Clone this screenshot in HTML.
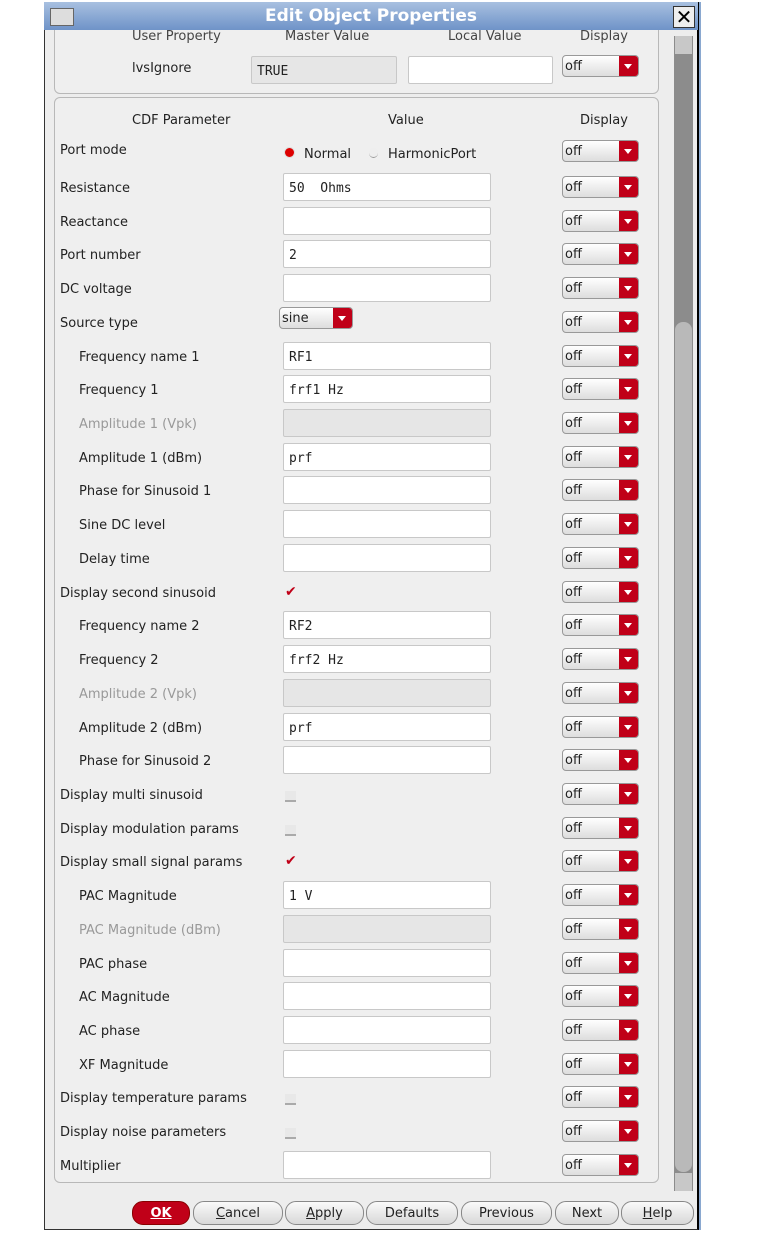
<!DOCTYPE html>
<html><head><style>
body{margin:0;width:758px;height:1245px;background:#fff;position:relative;overflow:hidden;font-family:"DejaVu Sans","Liberation Sans",sans-serif;font-size:13px;color:#222}
.a{position:absolute}
.win{left:44px;top:2px;width:652px;height:1226px;background:#ededed;border:1px solid #333;border-right:2px solid #000;box-shadow:2px 0 0 #8aa8d0}
.title{left:44px;top:2px;width:654px;height:28px;background:linear-gradient(#a8c0e0,#6f93c8);color:#fff;font-weight:bold;font-size:17px;text-align:center;line-height:28px}
.panel{border:1px solid #b8b8b8;border-radius:6px;background:#efefef}
.lbl{line-height:16px}
.g{color:#999}
.in{position:absolute;left:283px;height:28px;background:#fff;border:1px solid #c8c8c8;border-radius:2px;font-family:"DejaVu Sans Mono","Liberation Mono",monospace;font-size:13px;line-height:30px;padding-left:5px;box-sizing:border-box;width:208px}
.in.d{background:#e6e6e6}
.dd{position:absolute;left:562px;width:77px;height:22px;border:1px solid #999;border-radius:4px;background:linear-gradient(#fff,#ddd);box-sizing:border-box;font-size:13px;line-height:22px;padding-left:2px;overflow:hidden}
.dd:after{content:"";position:absolute;right:0;top:0;width:19px;height:20px;background:#c00018}
.dd:before{content:"";position:absolute;right:6px;top:8px;border:4px solid transparent;border-top:5px solid #fff;z-index:2}
.cb{position:absolute;left:285px;width:11px;height:9px;border-bottom:2px solid #aaa;background:#e8e8e8}
.ck{position:absolute;left:285px;color:#c00018;font-size:14px;font-weight:bold}
.btn{position:absolute;top:1201px;height:22px;border:1px solid #888;border-radius:11px;background:linear-gradient(#fafafa,#d8d8d8);text-align:center;line-height:24px;font-size:13px}
</style></head><body>
<div class="a win"></div>
<div class="a panel" style="left:54px;top:20px;width:603px;height:72px"></div>
<div class="a lbl" style="left:132px;top:29px;color:#444">User Property</div>
<div class="a lbl" style="left:285px;top:29px;color:#444">Master Value</div>
<div class="a lbl" style="left:448px;top:29px;color:#444">Local Value</div>
<div class="a lbl" style="left:580px;top:29px;color:#444">Display</div>
<div class="a title"></div>
<div class="a title" style="background:none">Edit Object Properties</div>
<div class="a" style="left:50px;top:8px;width:22px;height:16px;background:#ddd;border:1px solid #666"></div>
<div class="a" style="left:673px;top:6px;width:20px;height:20px;background:#eee;border:1px solid #333;font-size:20px;line-height:20px;text-align:center;color:#000">✕</div>
<div class="a lbl" style="left:132px;top:61px">lvsIgnore</div>
<div class="in d" style="left:251px;top:56px;width:146px">TRUE</div>
<div class="in" style="left:408px;top:56px;width:145px"></div>
<div class="dd" style="top:55px">off</div>
<div class="a panel" style="left:54px;top:97px;width:603px;height:1084px"></div>
<div class="a lbl" style="left:132px;top:113px">CDF Parameter</div>
<div class="a lbl" style="left:388px;top:113px">Value</div>
<div class="a lbl" style="left:580px;top:113px">Display</div>
<div class="a lbl" style="left:60px;top:143px">Port mode</div>
<div class="a" style="left:285px;top:148px;width:9px;height:9px;border-radius:50%;background:#d00;box-shadow:0 0 0 1px #ddd"></div>
<div class="a lbl" style="left:304px;top:147px">Normal</div>
<div class="a" style="left:369px;top:148px;width:9px;height:9px;border-radius:50%;background:#eee;border-bottom:1px solid #999"></div>
<div class="a lbl" style="left:388px;top:147px">HarmonicPort</div>
<div class="dd" style="top:140px">off</div>
<div class="a" style="left:674px;top:36px;width:19px;height:1155px;background:#8c8c8c"></div>
<div class="a" style="left:675px;top:36px;width:17px;height:18px;background:#c8c8c8"></div>
<div class="a" style="left:675px;top:1173px;width:17px;height:18px;background:#c8c8c8"></div>
<div class="a" style="left:675px;top:322px;width:17px;height:850px;background:#b9b9b9;border-radius:8px"></div>
<div id="rows"></div>
<div class="btn" style="left:132px;width:56px;background:#c00018;color:#fff;font-weight:bold;border-color:#800"><u>OK</u></div>
<div class="btn" style="left:193px;width:88px"><u>C</u>ancel</div>
<div class="btn" style="left:285px;width:77px"><u>A</u>pply</div>
<div class="btn" style="left:366px;width:90px">Defaults</div>
<div class="btn" style="left:461px;width:89px">Previous</div>
<div class="btn" style="left:555px;width:62px">Next</div>
<div class="btn" style="left:621px;width:71px"><u>H</u>elp</div>
<script>
var R=[["Resistance",0,"i","50  Ohms"],["Reactance",0,"i",""],["Port number",0,"i","2"],["DC voltage",0,"i",""],["Source type",0,"s"],
["Frequency name 1",1,"i","RF1"],["Frequency 1",1,"i","frf1 Hz"],["Amplitude 1 (Vpk)",1,"d"],["Amplitude 1 (dBm)",1,"i","prf"],["Phase for Sinusoid 1",1,"i",""],["Sine DC level",1,"i",""],["Delay time",1,"i",""],
["Display second sinusoid",0,"k"],["Frequency name 2",1,"i","RF2"],["Frequency 2",1,"i","frf2 Hz"],["Amplitude 2 (Vpk)",1,"d"],["Amplitude 2 (dBm)",1,"i","prf"],["Phase for Sinusoid 2",1,"i",""],
["Display multi sinusoid",0,"c"],["Display modulation params",0,"c"],["Display small signal params",0,"k"],["PAC Magnitude",1,"i","1 V"],["PAC Magnitude (dBm)",1,"d"],["PAC phase",1,"i",""],["AC Magnitude",1,"i",""],["AC phase",1,"i",""],["XF Magnitude",1,"i",""],
["Display temperature params",0,"c"],["Display noise parameters",0,"c"],["Multiplier",0,"i",""]];
var h="";R.forEach(function(r,i){var c=Math.round(187+i*33.72);
h+='<div class="a lbl'+(r[2]=="d"?" g":"")+'" style="left:'+(r[1]?79:60)+'px;top:'+(c-6)+'px">'+r[0]+'</div>';
if(r[2]=="i")h+='<div class="in" style="top:'+(c-14)+'px">'+r[3].replace(/ /g,"&nbsp;")+'</div>';
if(r[2]=="d")h+='<div class="in d" style="top:'+(c-14)+'px"></div>';
if(r[2]=="s")h+='<div class="dd" style="left:279px;top:'+(c-15)+'px;width:74px">sine</div>';
if(r[2]=="c")h+='<div class="cb" style="top:'+(c-3)+'px"></div>';
if(r[2]=="k")h+='<div class="ck" style="top:'+(c-8)+'px">✔</div>';
h+='<div class="dd" style="top:'+(c-11)+'px">off</div>';});
document.getElementById("rows").innerHTML=h;
</script>
</body></html>
